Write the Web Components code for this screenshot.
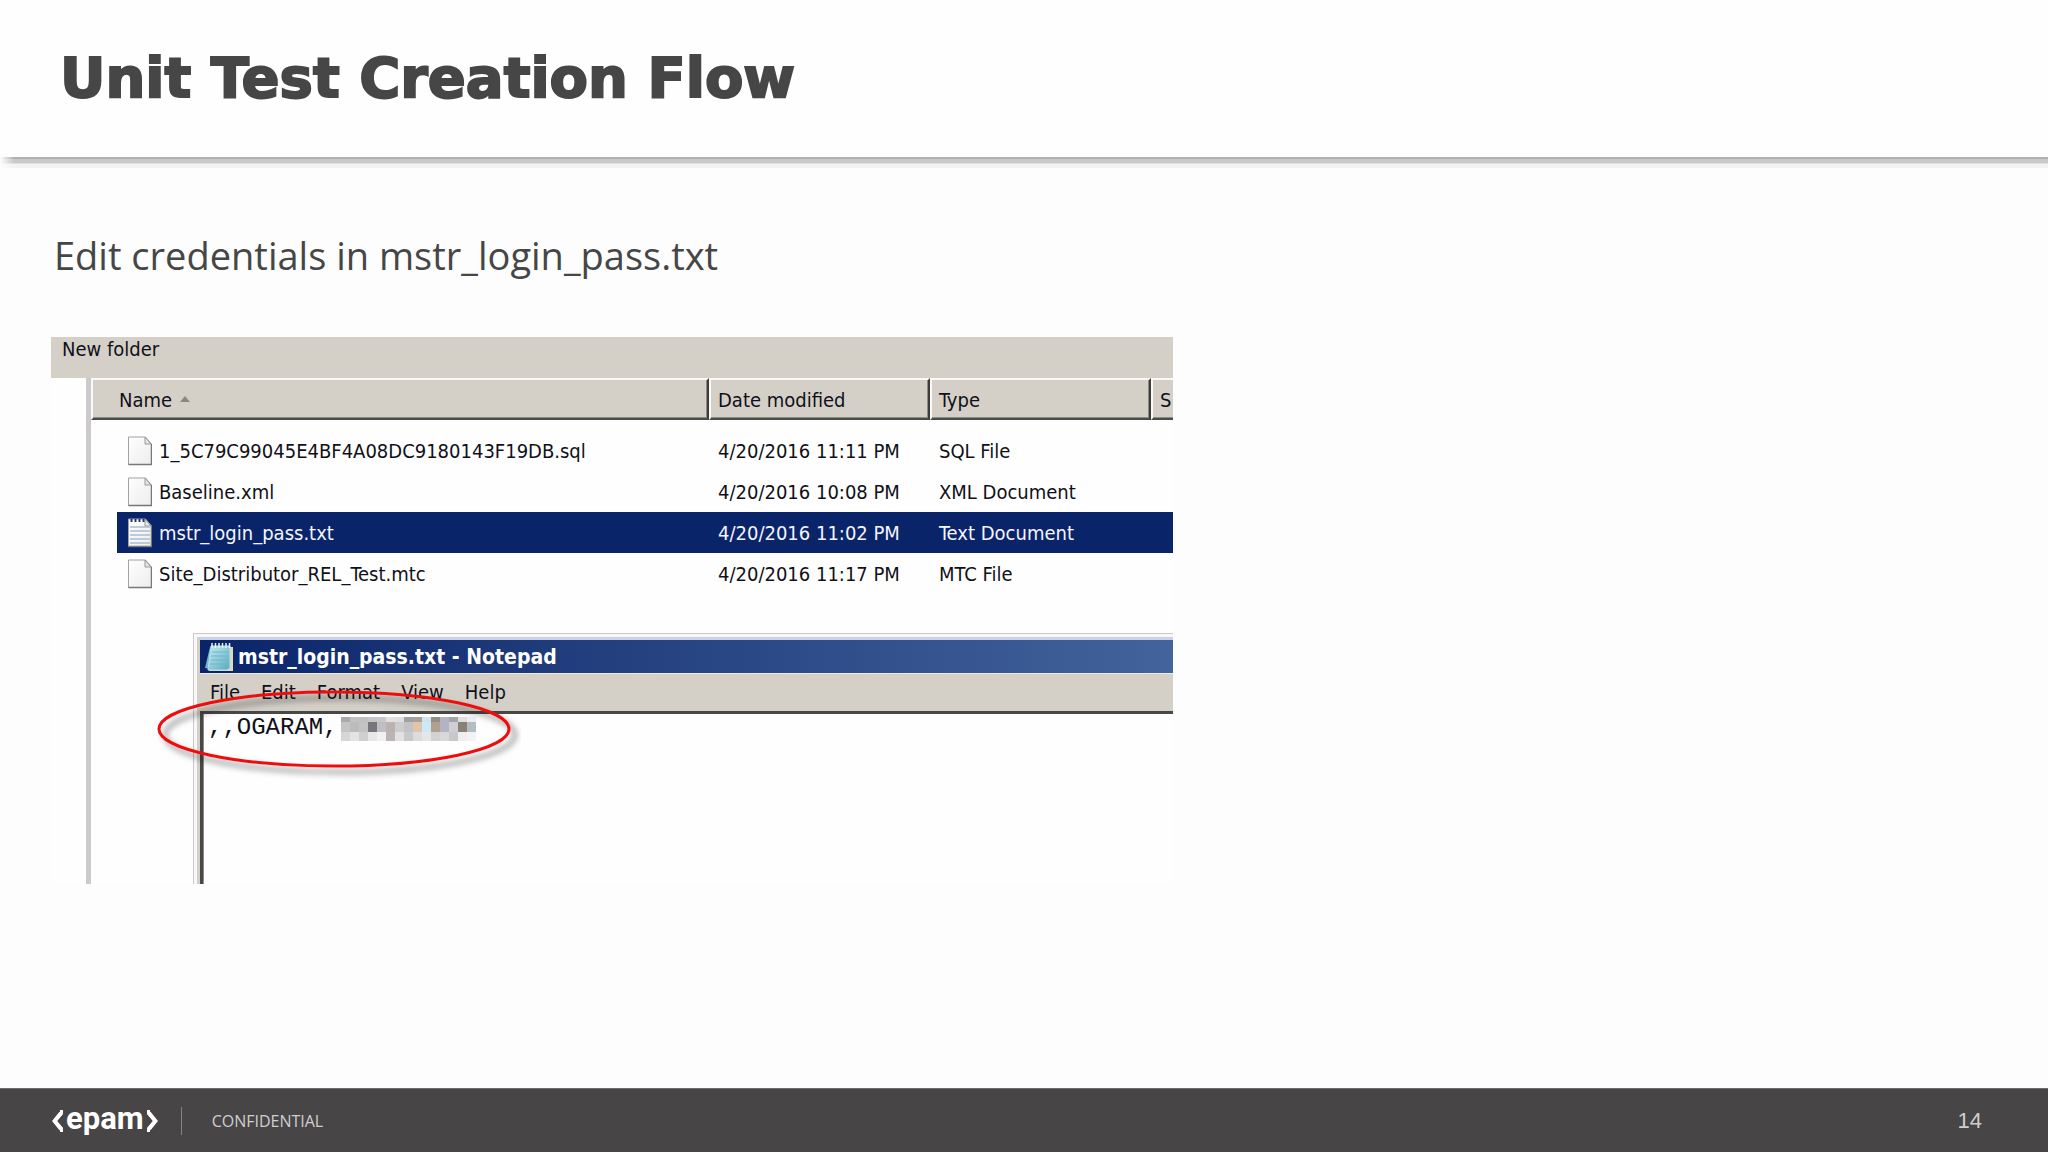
<!DOCTYPE html>
<html lang="en">
<head>
<meta charset="utf-8">
<title>Unit Test Creation Flow</title>
<style>
  body { margin: 0; background: #fdfdfd; color: #464646; font-family: "Open Sans", sans-serif; }
</style>
</head>
<body>
<slide-page>
  <slide-title slot="header">Unit Test Creation Flow</slide-title>
  <slide-lead>Edit credentials in mstr_login_pass.txt</slide-lead>
  <explorer-shot>
    <file-list></file-list>
    <notepad-window heading="mstr_login_pass.txt - Notepad" content=",,OGARAM,"></notepad-window>
  </explorer-shot>
  <slide-footer slot="footer" page="14">CONFIDENTIAL</slide-footer>
</slide-page>

<script>
const define = (name, html, setup) => {
  const template = document.createElement('template');
  template.innerHTML = html;
  customElements.define(name, class extends HTMLElement {
    constructor() {
      super();
      this.attachShadow({ mode: 'open' }).append(template.content.cloneNode(true));
    }
    connectedCallback() { if (setup) setup(this, this.shadowRoot); }
  });
};

define('slide-page', `
<style>
  :host { display: flex; flex-direction: column; min-height: 100vh; }
  main { flex: 1; padding: 66px 51px 0; }
</style>
<slot name="header"></slot>
<main><slot></slot></main>
<slot name="footer"></slot>`);

define('slide-title', `
<style>
  :host { display: block; background: #fefefe; }
  h1 { margin: 0; padding: 40px 60px 41px; font: bold 56px/76px "DejaVu Sans", sans-serif; color: #464646; -webkit-text-stroke: 2px #464646; }
  .rule { height: 11px; background: linear-gradient(90deg, #fdfdfd, transparent 14px), linear-gradient(#b0b0b0 0 2px, #c9c9c9 2px 6px, #f3f3f3 7px 11px); }
</style>
<header><h1><slot></slot></h1><div class="rule"></div></header>`);

define('slide-lead', `
<style>
  :host { display: block; padding-left: 3px; }
  p { margin: 0; font: 38px/42px "Open Sans", sans-serif; }
</style>
<p><slot></slot></p>`);

define('explorer-shot', `
<style>
  :host { display: block; margin-top: 61px; max-width: 1122px; overflow: hidden; background: #fefefe;
    font: 20px/24px "DejaVu Sans Condensed", "DejaVu Sans", sans-serif; color: #101018; }
  .toolbar { height: 41px; background: #d4d0c8; padding-left: 11px; }
  button { display: block; border: 0; padding: 0; background: none; font: inherit; color: inherit; }
  .pane { margin-left: 35px; border-left: 5px solid #cccaca; }
</style>
<div class="toolbar"><button type="button">New folder</button></div>
<div class="pane"><slot></slot></div>`);

const files = [
  ['1_5C79C99045E4BF4A08DC9180143F19DB.sql', '4/20/2016 11:11 PM', 'SQL File'],
  ['Baseline.xml', '4/20/2016 10:08 PM', 'XML Document'],
  ['mstr_login_pass.txt', '4/20/2016 11:02 PM', 'Text Document', true],
  ['Site_Distributor_REL_Test.mtc', '4/20/2016 11:17 PM', 'MTC File'],
];

define('file-icon', `
<style>
  :host { display: block; width: 24px; height: 30px; }
  svg { display: block; }
  .notes { display: none; }
  :host([notes]) .notes { display: inline; }
</style>
<svg width="24" height="30" viewBox="0 0 24 30" aria-hidden="true">
  <defs><linearGradient id="g" x2="1" y2="1"><stop stop-color="#fff"/><stop offset="1" stop-color="#eeecec"/></linearGradient></defs>
  <path d="M.5 1H17.5L23.5 8V28.5H.5Z" fill="url(#g)" stroke="#a3a1a1"/>
  <path d="M.5 28.5H23.5V8" fill="none" stroke="#777" stroke-width="1.5"/>
  <path d="M17 1L17 8H23Z" fill="#e6e6e6" stroke="#999"/>
  <g class="notes">
    <path d="M2 9H22M2 13H22M2 17H22M2 21H22M2 25H22" stroke="#a9bdd0" stroke-width="1.5"/>
    <path d="M3.500 1V4M7.500 1V4M11.500 1V4M15.500 1V4" stroke="#26386e" stroke-width="2"/>
  </g>
</svg>`);

define('file-list', `
<style>
  :host { display: block; overflow: hidden; }
  table { width: 100%; table-layout: fixed; border-collapse: separate; border-spacing: 0; font: inherit; color: inherit; }
  .name { width: 618px; } .date { width: 221px; } .type { width: 221px; }
  th { box-sizing: border-box; height: 42px; padding: 2px 0 0 7px; text-align: left; font-weight: normal; white-space: nowrap;
    background: #d4d0c8; border: 2px solid; border-color: #fbfaf8 #3c3c3a #4a4a48 #fbfaf8; box-shadow: inset -1px -1px #8f8c86; }
  th:first-child { padding-left: 26px; }
  th:last-child { border-right: 0; box-shadow: inset 0 -1px #8f8c86; }
  .sort { display: inline-block; margin-left: 8px; vertical-align: 5px; }
  tbody::before { content: ""; display: block; height: 10px; }
  td { height: 41px; padding: 0 0 0 9px; white-space: nowrap; box-sizing: border-box; }
  td:first-child { border-left: 26px solid transparent; background-clip: padding-box; padding-left: 11px; }
  .file { display: flex; align-items: center; gap: 7px; }
  .selected td { background-color: #0a246a; color: #f4f6fc; }
</style>
<table>
  <thead><tr>
    <th class="name">Name<svg class="sort" width="10" height="6" aria-hidden="true"><path d="M5 0L10 6H0Z" fill="#8b8882"/></svg></th>
    <th class="date">Date modified</th><th class="type">Type</th><th>S</th>
  </tr></thead>
  <tbody></tbody>
</table>`, (host, root) => {
  root.querySelector('tbody').innerHTML = files.map(([name, date, type, on]) =>
    `<tr${on ? ' class="selected"' : ''}><td><div class="file"><file-icon${on ? ' notes' : ''}></file-icon>${name}</div></td><td>${date}</td><td>${type}</td><td></td></tr>`).join('');
});

define('redacted-text', `
<style>:host { display: block; } svg { display: block; }</style>
<svg width="135" height="24" shape-rendering="crispEdges" aria-hidden="true"></svg>`, (host, root) => {
  const rows = [
    [0, 5, 'a9a9a9 c2c2c2 c0c0c0 c5c4c7 c9c9cb e2e2e2 dfdfe1 a29f9c a8a19a cfe4f2 938d86 b4b4bc a3a3a9 dfdfe1 eceef0'],
    [5, 10, 'c4c4c4 bcbcbc c3c3c5 77777b bfbfc3 b9b4b2 cdcdd0 c3c3c6 e0c5aa cfe8f8 b0a08f b2b4c4 cfcfd3 8a8176 b5bdc4'],
    [15, 9, 'd6d6d6 e3e3e3 cfcfcf e8e8e8 f1f1f1 bbb4b3 e2e2e2 c9c9c9 dcdcde e6e6e6 d2d2d2 d8d8da c8c8c8 efefef f3f3f3'],
  ];
  root.querySelector('svg').innerHTML = rows.map(([y, h, colors]) =>
    colors.split(' ').map((c, i) => `<rect x="${i * 9}" y="${y}" width="9" height="${h}" fill="#${c}"/>`).join('')).join('');
});

define('notepad-window', `
<style>
  :host { display: block; position: relative; margin: 39px 0 0 102px; border: solid #cdc9c2; border-width: 1px 0 0 1px; }
  .frame { border: solid #f8f8fa; border-width: 3px 0 0 3px; }
  .inner { border: solid #d4d0c8; border-width: 3px 0 0 3px; border-top-color: #cbd2e6; }
  .title { display: flex; align-items: center; gap: 4px; height: 33px; padding-left: 5px; color: #fff;
    background: linear-gradient(90deg, #0a246a, #24407f 43%, #42639c); font: bold 21px/24px "DejaVu Sans Condensed", "DejaVu Sans", sans-serif; white-space: nowrap; }
  .title svg { flex: none; }
  nav { display: flex; gap: 21px; height: 38px; box-sizing: border-box; padding: 6px 0 0 10px; background: #d4d0c8; border-top: 1px solid #eceae6; }
  button { align-self: start; border: 0; padding: 0; background: none; font: inherit; color: inherit; }
  .editor { display: flex; border: solid #484846; border-width: 3px 0 0 3px; box-shadow: inset 1px 0 #8a8a88; background: #fefefe; }
  textarea { display: block; box-sizing: border-box; width: 100%; height: 170px; resize: none; border: 0; outline: 0; margin: 0; padding: 0 0 0 5px;
    background: transparent; color: #101018; font: 24px/28px "Liberation Mono", monospace; overflow: hidden; }
  redacted-text { position: absolute; left: 147px; top: 83px; }
  .mark { position: absolute; left: -45px; top: 48px; pointer-events: none; }
</style>
<div class="frame"><div class="inner">
  <div class="title">
    <svg width="29" height="30" viewBox="0 0 29 30" aria-hidden="true">
      <defs><linearGradient id="n" x2="1" y2="1"><stop stop-color="#c5edf5"/><stop offset="1" stop-color="#58a9c0"/></linearGradient></defs>
      <path d="M5 5L0 26L5 27Z" fill="#76b3cc"/>
      <path d="M8 5H28V29H4Z" fill="#ded9b8"/>
      <path d="M6 4H25V26L22 28H3Z" fill="url(#n)" stroke="#b8dfe8"/>
      <path d="M7 10H24M6 14H24M6 18H24M5 22H23" stroke="#6eb6c8"/>
      <path d="M7 1V6M10.500 1V6M14 1V6M17.500 1V6M21 1V6M24.500 1V6" stroke="#e9f4f6" stroke-width="1.500"/>
    </svg><span id="heading"></span>
  </div>
  <nav aria-label="Menu"><button type="button">File</button><button type="button">Edit</button><button type="button">Format</button><button type="button">View</button><button type="button">Help</button></nav>
  <div class="editor"><textarea aria-label="File contents" spellcheck="false"></textarea></div>
</div></div>
<redacted-text></redacted-text>
<svg class="mark" width="372" height="104" aria-hidden="true">
  <defs><filter id="s" x="-10%" y="-20%" width="125%" height="160%"><feDropShadow dx="6" dy="6" stdDeviation="3" flood-color="#000" flood-opacity=".5"/></filter></defs>
  <ellipse cx="185" cy="47" rx="175" ry="37" fill="none" stroke="#ee1010" stroke-width="3" filter="url(#s)"/>
</svg>`, (host, root) => {
  root.querySelector('#heading').textContent = host.getAttribute('heading');
  root.querySelector('textarea').value = host.getAttribute('content');
});

define('slide-footer', `
<style>
  :host { display: block; }
  footer { display: flex; align-items: center; height: 64px; box-sizing: border-box; padding: 0 66px 0 52px; background: #474546; border-top: 1px solid #6d6b6c; color: #cfcecf; }
  .logo { display: flex; align-items: center; gap: 3px; color: #fff; font: bold 31px/40px Roboto, "Liberation Sans", sans-serif; }
  .logo span { padding-bottom: 4px; }
  .rule { width: 1px; height: 28px; margin: 0 30px 0 23px; background: #858384; }
  small { font: 16px/24px "Open Sans", sans-serif; }
  .page { margin-left: auto; font: 22px/24px "Liberation Sans", sans-serif; }
</style>
<footer>
  <div class="logo">
    <svg width="11" height="24" viewBox="0 0 11 24" aria-hidden="true"><path d="M9.500 1V4.500L3 12L9.500 19.500V23" fill="none" stroke="#fff" stroke-width="3"/><path d="M9 4L2.500 12L9 20" fill="none" stroke="#fff" stroke-width="4"/></svg>
    <span>epam</span>
    <svg width="11" height="24" viewBox="0 0 11 24" aria-hidden="true"><path d="M1.500 1V4.500L8 12L1.500 19.500V23" fill="none" stroke="#fff" stroke-width="3"/><path d="M2 4L8.500 12L2 20" fill="none" stroke="#fff" stroke-width="4"/></svg>
  </div>
  <div class="rule"></div>
  <small><slot></slot></small>
  <span class="page"></span>
</footer>`, (host, root) => { root.querySelector('.page').textContent = host.getAttribute('page'); });
</script>
</body>
</html>
